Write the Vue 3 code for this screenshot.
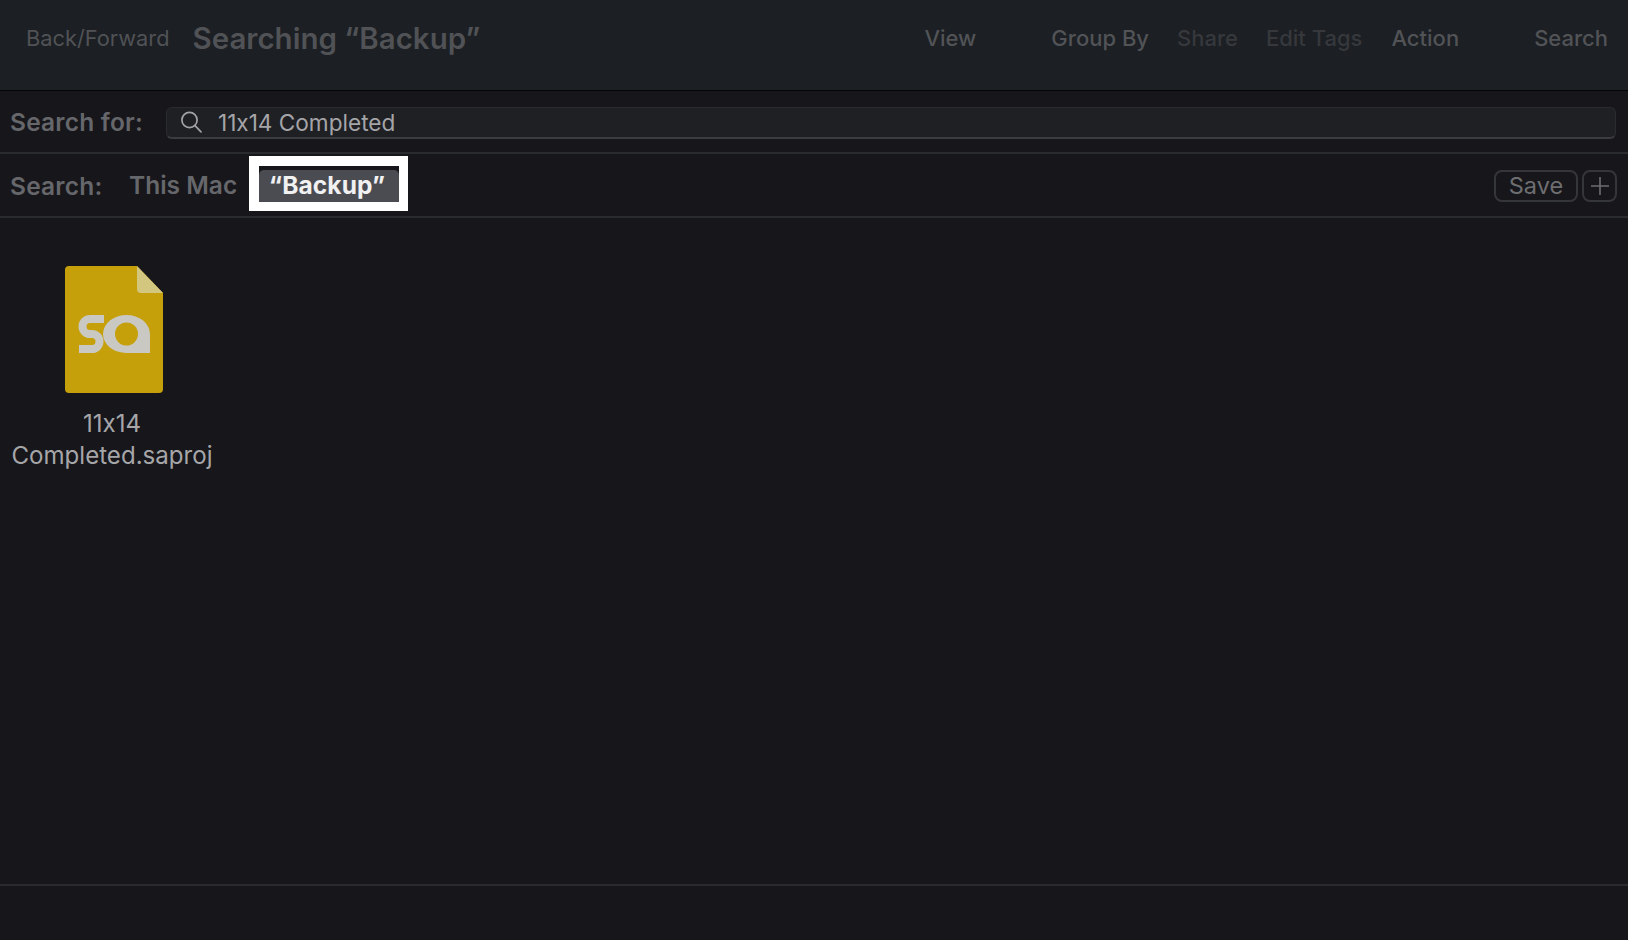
<script setup>
const tools = [
  { label: 'View', cls: 't-view' },
  { label: 'Group By', cls: 't-group' },
  { label: 'Share', cls: 't-share dim' },
  { label: 'Edit Tags', cls: 't-tags dim' },
  { label: 'Action', cls: 't-action' },
  { label: 'Search', cls: 't-search' }
]
</script>

<template>
  <div class="window">
    <header class="toolbar">
      <span class="nav">Back/Forward</span>
      <h1 class="title">Searching “Backup”</h1>
      <div class="tools">
        <span v-for="t in tools" :key="t.label" class="tool" :class="t.cls">{{ t.label }}</span>
      </div>
    </header>

    <div class="search-row">
      <span class="row-label">Search for:</span>
      <div class="field">
        <svg class="glass" width="24" height="24" viewBox="0 0 24 24" fill="none" stroke="#a3a3a5" stroke-width="1.7" stroke-linecap="round">
          <circle cx="10.5" cy="10" r="7.6" />
          <path d="M16 15.6l6 6.2" />
        </svg>
        <span class="query">11x14 Completed</span>
      </div>
    </div>

    <div class="scope-row">
      <span class="row-label scope-label">Search:</span>
      <span class="scope">This Mac</span>
      <div class="focus">
        <div class="focus-inner"><span class="pill">“Backup”</span></div>
      </div>
      <div class="actions">
        <button class="btn save"><span class="save-text">Save</span></button>
        <button class="btn plus" aria-label="Add">
          <svg width="20" height="20" viewBox="0 0 20 20" stroke="#6e6e71" stroke-width="1.6"><path d="M10 1v18M1 10h18" /></svg>
        </button>
      </div>
    </div>

    <main class="results">
      <div class="file">
        <svg class="doc" width="98" height="127" viewBox="0 0 98 127">
          <path d="M4 0H72L98 27V123a4 4 0 0 1-4 4H4a4 4 0 0 1-4-4V4a4 4 0 0 1 4-4Z" fill="#c5a00b" />
          <path d="M72 0L98 27H76a4 4 0 0 1-4-4Z" fill="#d3c67e" />
          <path d="M39 53H25a7.500 7.500 0 0 0 0 15H27a7.500 7.500 0 0 1 0 15H14" fill="none" stroke="#c9c8c3" stroke-width="8" />
          <path fill-rule="evenodd" fill="#c9c8c3" d="M38 68A23.500 19 0 0 1 85 68V87H61.500A23.500 19 0 0 1 38 68ZM50 68a11.500 11.500 0 1 0 23 0a11.500 11.500 0 1 0-23 0Z" />
        </svg>
        <div class="name">11x14<br />Completed.saproj</div>
      </div>
    </main>

    <footer class="status"></footer>
  </div>
</template>

<style>
html, body { margin: 0; background: #16161b; }
</style>

<style scoped>
.window {
  width: 1628px;
  height: 940px;
  display: flex;
  flex-direction: column;
  background: #16161b;
  font-family: Inter, "Liberation Sans", sans-serif;
  font-feature-settings: "calt" 0;
  overflow: hidden;
}
.toolbar {
  height: 91px;
  flex: none;
  box-sizing: border-box;
  display: flex;
  align-items: center;
  padding: 0 0 15px 26px;
  background: #1c1f23;
  border-bottom: 1px solid #050506;
}
.nav { font-size: 21.800px; color: #505256; white-space: nowrap; }
.title { margin: 0 0 0 23px; font-size: 29.500px; font-weight: 600; color: #505256; white-space: nowrap; }
.tools { display: flex; margin-left: auto; }
.tool { font-size: 22px; font-weight: 500; color: #515357; white-space: nowrap; }
.tool.dim { color: #36383c; }
.t-group { margin-left: 75px; }
.t-share { margin-left: 28px; }
.t-tags { margin-left: 28px; }
.t-action { margin-left: 29px; }
.t-search { margin: 0 20px 0 75px; }

.search-row {
  height: 63px;
  flex: none;
  box-sizing: border-box;
  display: flex;
  align-items: center;
  padding: 0 12px 0 10px;
  border-bottom: 2px solid #2a2b2f;
}
.row-label { font-size: 24.500px; font-weight: 600; letter-spacing: 0.2px; color: #66676b; white-space: nowrap; }
.field {
  flex: 1;
  height: 32px;
  margin: 2px 0 0 23px;
  box-sizing: border-box;
  display: flex;
  align-items: center;
  padding-left: 12px;
  background: #1f2024;
  border: 1px solid #2a2b2f;
  border-bottom: 2px solid #3b3c40;
  border-radius: 6px;
}
.glass { flex: none; }
.query { margin: 1px 0 0 15px; font-size: 22.600px; color: #a5a5a8; white-space: nowrap; }

.scope-row {
  height: 64px;
  flex: none;
  box-sizing: border-box;
  display: flex;
  align-items: center;
  padding: 0 11px 0 10px;
  border-bottom: 2px solid #2a2b2f;
}
.scope-label { width: 119px; flex: none; margin-top: 2px; }
.scope { width: 120px; flex: none; font-size: 24.500px; font-weight: 600; color: #66676b; white-space: nowrap; }
.focus {
  box-sizing: border-box;
  width: 159px;
  height: 55px;
  flex: none;
  margin-bottom: 3px;
  padding: 10px 9px 9px 10px;
  background: #fff;
}
.focus-inner { height: 36px; box-sizing: border-box; padding-top: 4px; background: #16161b; }
.pill {
  display: block;
  height: 32px;
  padding-right: 4px;
  line-height: 31px;
  text-align: center;
  font-size: 24.500px;
  font-weight: 700;
  letter-spacing: 0.1px;
  color: #f1f1f2;
  background: #4b4c52;
  border-radius: 5px 5px 0 0;
}
.actions { margin: 2px 0 0 auto; display: flex; gap: 4px; }
.btn {
  height: 32px;
  padding: 0;
  box-sizing: border-box;
  display: flex;
  align-items: center;
  justify-content: center;
  background: transparent;
  border: 2px solid #35363a;
  border-radius: 8px;
  font-family: inherit;
}
.save { width: 84px; font-size: 23.500px; color: #6e6e71; }
.save-text { margin-bottom: 2px; }
.plus { width: 35px; }

.results { flex: 1; }
.file { width: 220px; margin: 48px 0 0 2px; display: flex; flex-direction: column; align-items: center; }
.doc { margin-left: 4px; }
.name { margin-top: 15px; text-align: center; font-size: 24.100px; line-height: 32px; color: #a6a6a9; white-space: nowrap; }

.status { height: 54px; flex: none; border-top: 2px solid #2a2b2f; }
</style>
